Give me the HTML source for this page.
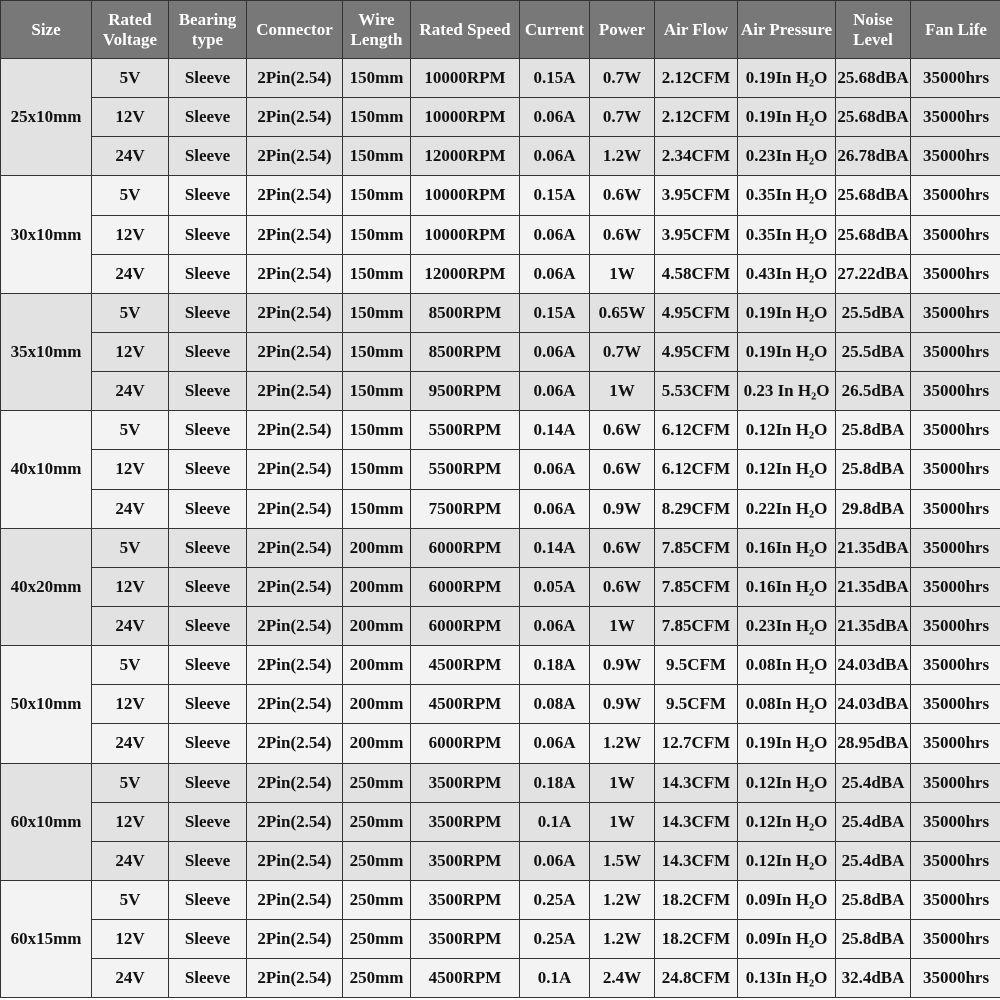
<!DOCTYPE html>
<html><head><meta charset="utf-8"><style>
body{margin:0;width:1000px;height:1000px;overflow:hidden;background:#fff}
table{border-collapse:collapse;table-layout:fixed;width:1001px;font-family:"Liberation Serif",serif;font-weight:bold;font-size:17px;color:#111;text-align:center}
td,th{border:1.5px solid #333;padding:0;white-space:nowrap;overflow:hidden}
th{background:#787878;color:#fff;height:57px;font-size:17px;line-height:20px}
td{height:38.15px}
tr.a td{background:#e2e2e2}
tr.b td{background:#f3f3f3}
</style></head><body>
<table>
<colgroup><col style="width:91px"><col style="width:77px"><col style="width:78px"><col style="width:96px"><col style="width:68px"><col style="width:109px"><col style="width:70px"><col style="width:65px"><col style="width:83px"><col style="width:98px"><col style="width:75px"><col style="width:91px"></colgroup>
<tr><th>Size</th><th>Rated<br>Voltage</th><th>Bearing<br>type</th><th>Connector</th><th>Wire<br>Length</th><th>Rated Speed</th><th>Current</th><th>Power</th><th>Air Flow</th><th>Air Pressure</th><th>Noise<br>Level</th><th>Fan Life</th></tr>
<tr class="a"><td rowspan="3">25x10mm</td><td>5V</td><td>Sleeve</td><td>2Pin(2.54)</td><td>150mm</td><td>10000RPM</td><td>0.15A</td><td>0.7W</td><td>2.12CFM</td><td>0.19In H₂O</td><td>25.68dBA</td><td>35000hrs</td></tr>
<tr class="a"><td>12V</td><td>Sleeve</td><td>2Pin(2.54)</td><td>150mm</td><td>10000RPM</td><td>0.06A</td><td>0.7W</td><td>2.12CFM</td><td>0.19In H₂O</td><td>25.68dBA</td><td>35000hrs</td></tr>
<tr class="a"><td>24V</td><td>Sleeve</td><td>2Pin(2.54)</td><td>150mm</td><td>12000RPM</td><td>0.06A</td><td>1.2W</td><td>2.34CFM</td><td>0.23In H₂O</td><td>26.78dBA</td><td>35000hrs</td></tr>
<tr class="b"><td rowspan="3">30x10mm</td><td>5V</td><td>Sleeve</td><td>2Pin(2.54)</td><td>150mm</td><td>10000RPM</td><td>0.15A</td><td>0.6W</td><td>3.95CFM</td><td>0.35In H₂O</td><td>25.68dBA</td><td>35000hrs</td></tr>
<tr class="b"><td>12V</td><td>Sleeve</td><td>2Pin(2.54)</td><td>150mm</td><td>10000RPM</td><td>0.06A</td><td>0.6W</td><td>3.95CFM</td><td>0.35In H₂O</td><td>25.68dBA</td><td>35000hrs</td></tr>
<tr class="b"><td>24V</td><td>Sleeve</td><td>2Pin(2.54)</td><td>150mm</td><td>12000RPM</td><td>0.06A</td><td>1W</td><td>4.58CFM</td><td>0.43In H₂O</td><td>27.22dBA</td><td>35000hrs</td></tr>
<tr class="a"><td rowspan="3">35x10mm</td><td>5V</td><td>Sleeve</td><td>2Pin(2.54)</td><td>150mm</td><td>8500RPM</td><td>0.15A</td><td>0.65W</td><td>4.95CFM</td><td>0.19In H₂O</td><td>25.5dBA</td><td>35000hrs</td></tr>
<tr class="a"><td>12V</td><td>Sleeve</td><td>2Pin(2.54)</td><td>150mm</td><td>8500RPM</td><td>0.06A</td><td>0.7W</td><td>4.95CFM</td><td>0.19In H₂O</td><td>25.5dBA</td><td>35000hrs</td></tr>
<tr class="a"><td>24V</td><td>Sleeve</td><td>2Pin(2.54)</td><td>150mm</td><td>9500RPM</td><td>0.06A</td><td>1W</td><td>5.53CFM</td><td>0.23 In H₂O</td><td>26.5dBA</td><td>35000hrs</td></tr>
<tr class="b"><td rowspan="3">40x10mm</td><td>5V</td><td>Sleeve</td><td>2Pin(2.54)</td><td>150mm</td><td>5500RPM</td><td>0.14A</td><td>0.6W</td><td>6.12CFM</td><td>0.12In H₂O</td><td>25.8dBA</td><td>35000hrs</td></tr>
<tr class="b"><td>12V</td><td>Sleeve</td><td>2Pin(2.54)</td><td>150mm</td><td>5500RPM</td><td>0.06A</td><td>0.6W</td><td>6.12CFM</td><td>0.12In H₂O</td><td>25.8dBA</td><td>35000hrs</td></tr>
<tr class="b"><td>24V</td><td>Sleeve</td><td>2Pin(2.54)</td><td>150mm</td><td>7500RPM</td><td>0.06A</td><td>0.9W</td><td>8.29CFM</td><td>0.22In H₂O</td><td>29.8dBA</td><td>35000hrs</td></tr>
<tr class="a"><td rowspan="3">40x20mm</td><td>5V</td><td>Sleeve</td><td>2Pin(2.54)</td><td>200mm</td><td>6000RPM</td><td>0.14A</td><td>0.6W</td><td>7.85CFM</td><td>0.16In H₂O</td><td>21.35dBA</td><td>35000hrs</td></tr>
<tr class="a"><td>12V</td><td>Sleeve</td><td>2Pin(2.54)</td><td>200mm</td><td>6000RPM</td><td>0.05A</td><td>0.6W</td><td>7.85CFM</td><td>0.16In H₂O</td><td>21.35dBA</td><td>35000hrs</td></tr>
<tr class="a"><td>24V</td><td>Sleeve</td><td>2Pin(2.54)</td><td>200mm</td><td>6000RPM</td><td>0.06A</td><td>1W</td><td>7.85CFM</td><td>0.23In H₂O</td><td>21.35dBA</td><td>35000hrs</td></tr>
<tr class="b"><td rowspan="3">50x10mm</td><td>5V</td><td>Sleeve</td><td>2Pin(2.54)</td><td>200mm</td><td>4500RPM</td><td>0.18A</td><td>0.9W</td><td>9.5CFM</td><td>0.08In H₂O</td><td>24.03dBA</td><td>35000hrs</td></tr>
<tr class="b"><td>12V</td><td>Sleeve</td><td>2Pin(2.54)</td><td>200mm</td><td>4500RPM</td><td>0.08A</td><td>0.9W</td><td>9.5CFM</td><td>0.08In H₂O</td><td>24.03dBA</td><td>35000hrs</td></tr>
<tr class="b"><td>24V</td><td>Sleeve</td><td>2Pin(2.54)</td><td>200mm</td><td>6000RPM</td><td>0.06A</td><td>1.2W</td><td>12.7CFM</td><td>0.19In H₂O</td><td>28.95dBA</td><td>35000hrs</td></tr>
<tr class="a"><td rowspan="3">60x10mm</td><td>5V</td><td>Sleeve</td><td>2Pin(2.54)</td><td>250mm</td><td>3500RPM</td><td>0.18A</td><td>1W</td><td>14.3CFM</td><td>0.12In H₂O</td><td>25.4dBA</td><td>35000hrs</td></tr>
<tr class="a"><td>12V</td><td>Sleeve</td><td>2Pin(2.54)</td><td>250mm</td><td>3500RPM</td><td>0.1A</td><td>1W</td><td>14.3CFM</td><td>0.12In H₂O</td><td>25.4dBA</td><td>35000hrs</td></tr>
<tr class="a"><td>24V</td><td>Sleeve</td><td>2Pin(2.54)</td><td>250mm</td><td>3500RPM</td><td>0.06A</td><td>1.5W</td><td>14.3CFM</td><td>0.12In H₂O</td><td>25.4dBA</td><td>35000hrs</td></tr>
<tr class="b"><td rowspan="3">60x15mm</td><td>5V</td><td>Sleeve</td><td>2Pin(2.54)</td><td>250mm</td><td>3500RPM</td><td>0.25A</td><td>1.2W</td><td>18.2CFM</td><td>0.09In H₂O</td><td>25.8dBA</td><td>35000hrs</td></tr>
<tr class="b"><td>12V</td><td>Sleeve</td><td>2Pin(2.54)</td><td>250mm</td><td>3500RPM</td><td>0.25A</td><td>1.2W</td><td>18.2CFM</td><td>0.09In H₂O</td><td>25.8dBA</td><td>35000hrs</td></tr>
<tr class="b"><td>24V</td><td>Sleeve</td><td>2Pin(2.54)</td><td>250mm</td><td>4500RPM</td><td>0.1A</td><td>2.4W</td><td>24.8CFM</td><td>0.13In H₂O</td><td>32.4dBA</td><td>35000hrs</td></tr>
</table>
</body></html>
